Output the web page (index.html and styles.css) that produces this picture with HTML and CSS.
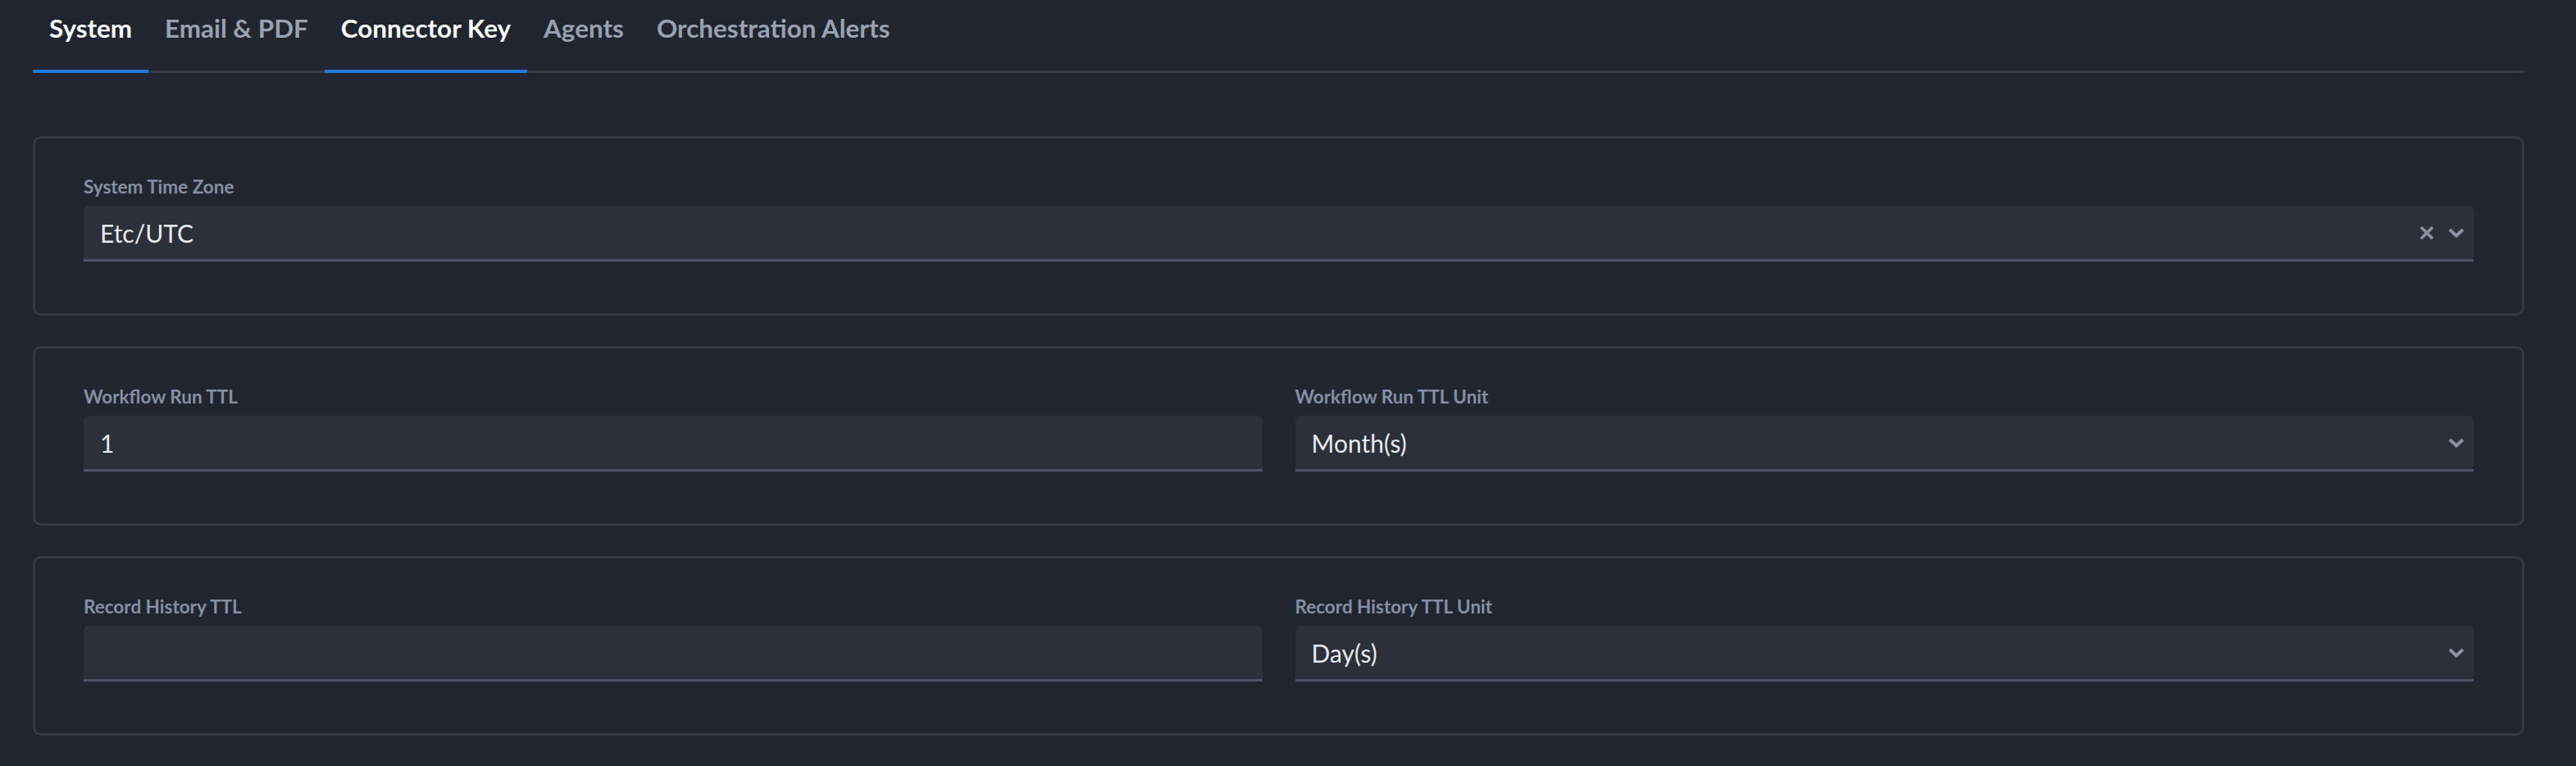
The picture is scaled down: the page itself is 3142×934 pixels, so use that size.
FILE: index.html
```html
<!DOCTYPE html>
<html lang="en">
<head>
    <meta charset="UTF-8">
    <title>Settings</title>
    <link rel="stylesheet" href="styles.css">
</head>
<body>
    <div class="settings-page">
        <nav class="tabs">
            <a class="tab active">System</a>
            <a class="tab">Email &amp; PDF</a>
            <a class="tab active">Connector Key</a>
            <a class="tab">Agents</a>
            <a class="tab">Orchestration Alerts</a>
        </nav>

        <div class="cards">
            <section class="card">
                <div class="field">
                    <label class="field-label">System Time Zone</label>
                    <div class="select-box">
                        <span class="select-value">Etc/UTC</span>
                        <span class="select-icons">
                            <svg class="icon-clear" viewBox="0 0 18 18" width="18" height="18">
                                <path d="M2 2 L16 16 M16 2 L2 16" stroke="currentColor" stroke-width="3.6" stroke-linecap="butt" fill="none"/>
                            </svg>
                            <svg class="icon-chevron" viewBox="0 0 20 12" width="20" height="12">
                                <path d="M2 2 L10 9.5 L18 2" stroke="currentColor" stroke-width="3.8" fill="none"/>
                            </svg>
                        </span>
                    </div>
                </div>
            </section>

            <section class="card">
                <div class="field-row">
                    <div class="field">
                        <label class="field-label" for="workflowTtl">Workflow Run TTL</label>
                        <input class="text-input" id="workflowTtl" type="text" value="1">
                    </div>
                    <div class="field">
                        <label class="field-label">Workflow Run TTL Unit</label>
                        <div class="select-box">
                            <span class="select-value">Month(s)</span>
                            <span class="select-icons">
                                <svg class="icon-chevron" viewBox="0 0 20 12" width="20" height="12">
                                    <path d="M2 2 L10 9.5 L18 2" stroke="currentColor" stroke-width="3.8" fill="none"/>
                                </svg>
                            </span>
                        </div>
                    </div>
                </div>
            </section>

            <section class="card">
                <div class="field-row">
                    <div class="field">
                        <label class="field-label" for="recordTtl">Record History TTL</label>
                        <input class="text-input" id="recordTtl" type="text" value="">
                    </div>
                    <div class="field">
                        <label class="field-label">Record History TTL Unit</label>
                        <div class="select-box">
                            <span class="select-value">Day(s)</span>
                            <span class="select-icons">
                                <svg class="icon-chevron" viewBox="0 0 20 12" width="20" height="12">
                                    <path d="M2 2 L10 9.5 L18 2" stroke="currentColor" stroke-width="3.8" fill="none"/>
                                </svg>
                            </span>
                        </div>
                    </div>
                </div>
            </section>
        </div>
    </div>
</body>
</html>
```

FILE: styles.css
```css
body {
    margin: 0;
    background-color: #21252f;
    font-family: "Lato", "Liberation Sans", sans-serif;
    color: #e8eaee;
}
.settings-page {
    padding: 0 63px 0 40px;
}

/* tab strip */
.tabs {
    display: flex;
    border-bottom: 3px solid #363b47;
}
.tab {
    padding: 14px 20px 31px;
    margin-bottom: -3px;
    font-size: 31.4px;
    line-height: 40px;
    font-weight: 700;
    color: #9aa1b0;
    border-bottom: 4px solid transparent;
    cursor: pointer;
}
.tab.active {
    color: #ffffff;
    border-bottom-color: #1f7ae0;
}

/* cards */
.cards {
    display: flex;
    flex-direction: column;
    gap: 37px;
    margin-top: 77px;
}
.card {
    border: 3px solid #343945;
    border-radius: 10px;
    padding: 44px 59px 63px;
}
.field-row {
    display: grid;
    grid-template-columns: 1fr 1fr;
    gap: 40px;
}
.field {
    display: flex;
    flex-direction: column;
}
.field-label {
    font-size: 22.5px;
    line-height: 30px;
    font-weight: 700;
    color: #8690a4;
    margin-bottom: 8px;
}

/* inputs and selects */
.text-input,
.select-box {
    box-sizing: border-box;
    height: 68px;
    padding: 0 20px;
    background-color: #2b303b;
    border: none;
    border-bottom: 3px solid #4d5467;
    border-radius: 6px 6px 0 0;
    font-family: inherit;
    font-size: 30px;
    color: #e8eaee;
    outline: none;
}
.select-box {
    display: flex;
    align-items: center;
    padding-right: 11px;
}
.select-value {
    flex: 1;
}
.select-icons {
    display: flex;
    align-items: center;
    gap: 17px;
    color: #8a92a3;
}
.icon-clear,
.icon-chevron {
    display: block;
}
```
